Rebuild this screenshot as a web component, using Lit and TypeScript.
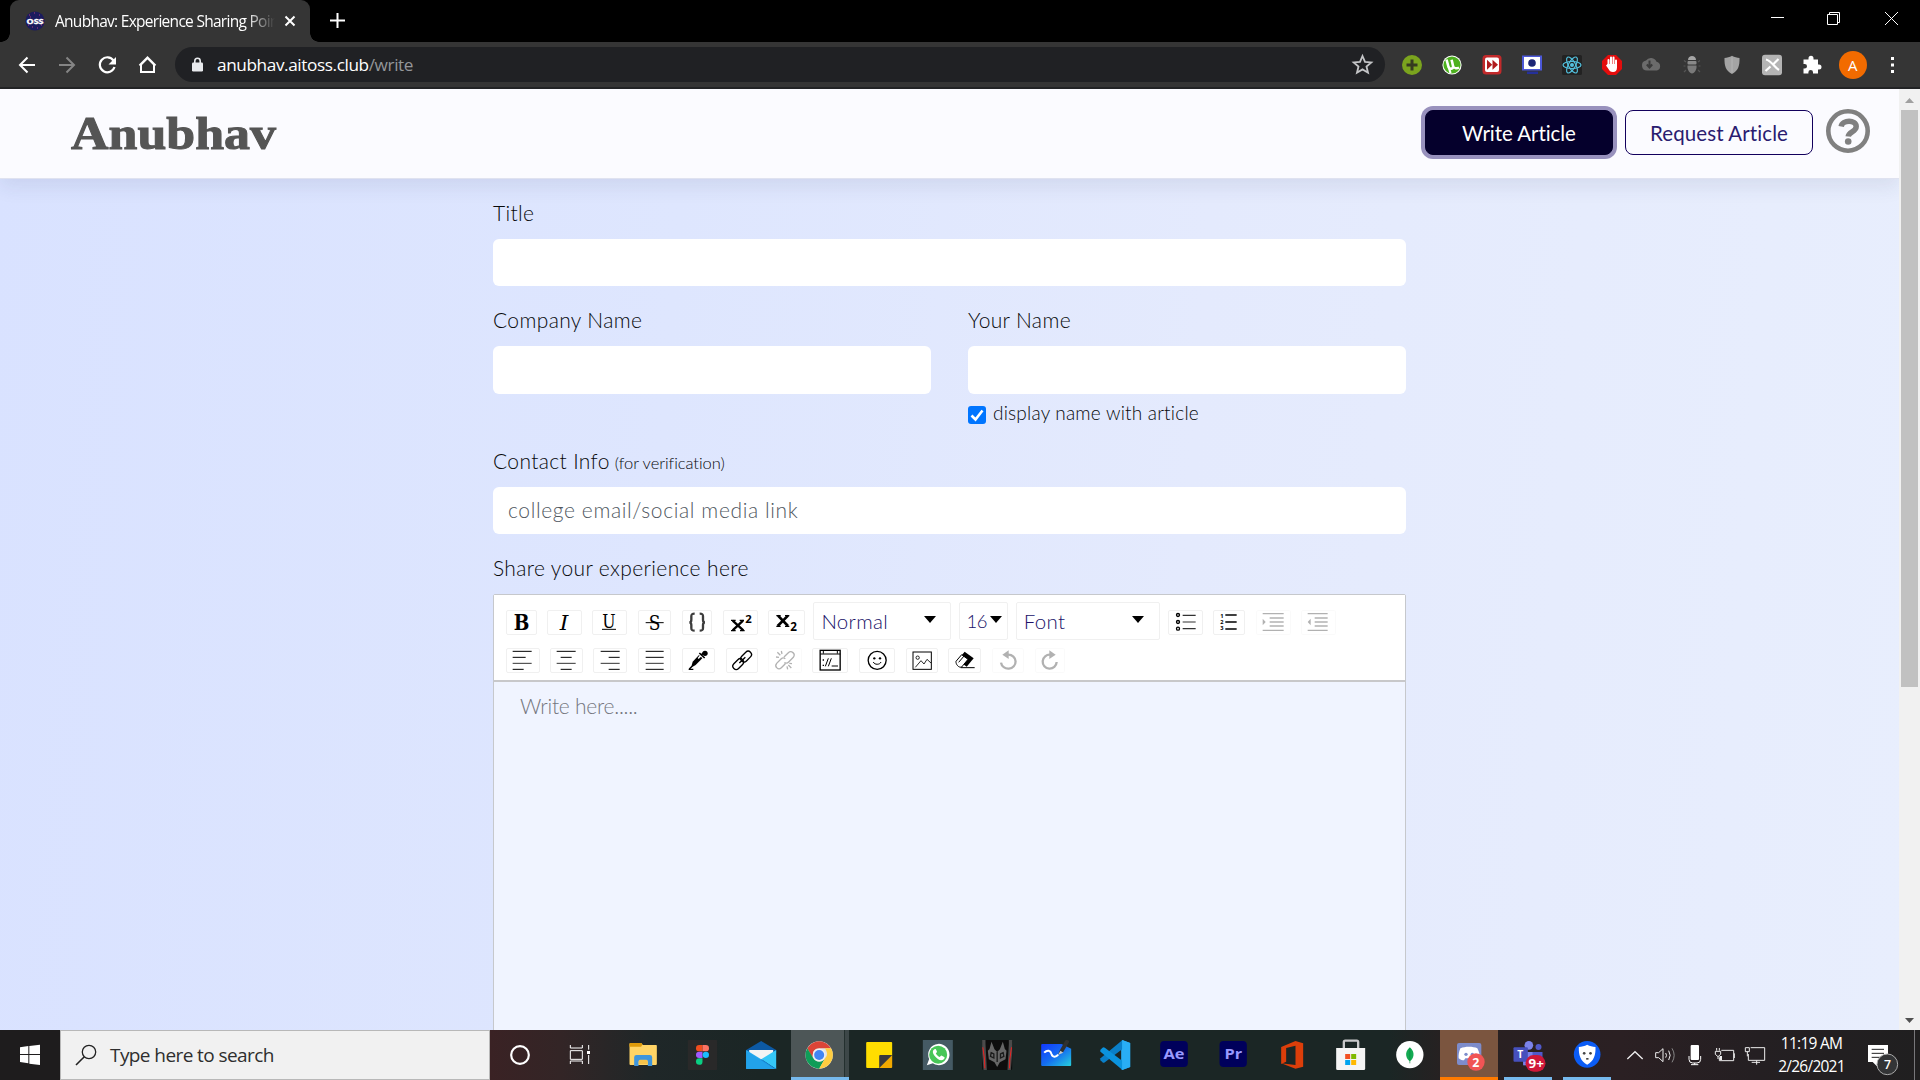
import { LitElement, html, css, svg, nothing, type TemplateResult } from "lit";
import { customElement } from "lit/decorators.js";

type Art = TemplateResult | TemplateResult[];

const pic = (w: number, h: number, box: string, art: Art) =>
  html`<svg width=${w} height=${h} viewBox=${box} fill="none" preserveAspectRatio="none">${art}</svg>`;

/* ---------- browser extensions, 40 x 40 cells centred on 20,20 ---------- */
const extensions: TemplateResult[] = [
  svg`<circle cx="20" cy="20" r="10" fill="#7ba41e"/><path d="M20 14.5v11M14.5 20h11" stroke="#363a20" stroke-width="3"/>`,
  svg`<circle cx="20" cy="20" r="9.6" fill="#fff"/><circle cx="20" cy="20" r="8.6" fill="#4cb01e"/><path d="M14.5 14.5l2 7.5c.8 2.6 5 2.2 4.600-.8l-1.500-6.500M21 21c.8 3 4.500 2.500 6 1.500" stroke="#fff" stroke-width="2.600"/><path d="M17 23l1.500 5" stroke="#fff" stroke-width="2.200"/>`,
  svg`<rect x="10.500" y="10" width="19" height="19.500" rx="3.500" fill="#c22a2b"/><rect x="13" y="12.500" width="14" height="14.500" rx="2" fill="#fff"/><path d="M15 14.800l5.200 5-5.200 5zM20.500 14.800l5.500 5-5.500 5z" fill="#b01c1e"/>`,
  svg`<rect x="10" y="10.500" width="20" height="15" fill="#4c58d8"/><rect x="12" y="12" width="16" height="12" fill="#fff"/><circle cx="20" cy="18" r="3.800" fill="#1c2677"/><path d="M15 27.800h11" stroke="#25309a" stroke-width="2.500"/>`,
  svg`<rect x="10" y="10" width="20" height="20" rx="1.500" fill="#222"/><g stroke="#53c1de" stroke-width="1.200"><ellipse cx="20" cy="20" rx="9" ry="3.500"/><ellipse cx="20" cy="20" rx="9" ry="3.500" transform="rotate(60 20 20)"/><ellipse cx="20" cy="20" rx="9" ry="3.500" transform="rotate(120 20 20)"/></g><circle cx="20" cy="20" r="2" fill="#53c1de"/>`,
  svg`<path d="M16 10h8l6 6v8l-6 6h-8l-6-6v-8z" fill="#e40d0d"/><path d="M16.500 21v-6M19 20v-7.500M21.500 20v-7.500M24 21v-5.500" stroke="#fff" stroke-width="2" stroke-linecap="round"/><path d="M15.500 19h9.500v3.500c0 3-1.500 4.500-4 4.500s-3.500-1-4.500-3l-2.500-3.500z" fill="#fff"/>`,
  svg`<path d="M15 25.500a5 5 0 0 1-1-9.900 6 6 0 0 1 10.500 1.200 4.500 4.500 0 0 1 .5 8.700z" fill="#6b6b6b"/><path d="M17.500 15.500v6M14.800 19.500l2.700 3 2.700-3" stroke="#3a3a3a" stroke-width="2"/>`,
  svg`<path d="M16 15c0-5.500 8-5.500 8 0z" fill="#a5a5a5"/><rect x="15.500" y="16" width="9" height="3.500" rx="1" fill="#898989"/><path d="M15.500 20.500h9c.5 4-2 8-4.500 8s-5-4-4.500-8z" fill="#7a7a7a"/><path d="M14 17l-2-1.500M26 17l2-1.500M13.500 21h-2M26.500 21h2M14 25l-2 2M26 25l2 2" stroke="#555" stroke-width="1.200"/>`,
  svg`<path d="M20 10.800c2.500 1.500 5 2 7.500 2.200.3 8-1.500 13-7.500 16-6-3-7.800-8-7.500-16 2.500-.2 5-.7 7.500-2.200z" fill="#a4a4a4"/><path d="M20 12.500v15" stroke="#b5b5b5" stroke-width="1"/>`,
  svg`<rect x="10" y="9.800" width="20" height="20.500" rx="3" fill="#b4b4b4"/><path d="M14 14.500c5 1 9 8 13 10.500M26.500 14l-5 5M18.500 21.500l-5 4.500" stroke="#fff" stroke-width="2.200"/>`,
  svg`<path d="M12 15.500h5v-1.200a2.500 2.500 0 1 1 5 0v1.200h4.500v5h1a2.500 2.500 0 1 1 0 5h-1v4h-5v-1.300a2.300 2.300 0 1 0-4.600 0v1.300H12v-5h1.200a2.300 2.300 0 1 0 0-4.600H12z" fill="#fff" transform="translate(-.5 -1)"/>`,
];

/* ---------- editor controls: [left, right] edges in the 1/3px icon grid ---------- */
interface Tool { l: number; r: number; off?: boolean; art: Art }

const line = (x1: number, x2: number, y: number, c = "#000", w = 3) =>
  svg`<path d=${`M${x1} ${y}H${x2}`} stroke=${c} stroke-width=${w}/>`;

const glyph = (s: string, x: number, y: number, size: number, len: number, cls: string) =>
  svg`<text class=${cls} x=${x} y=${y} font-size=${size} textLength=${len} lengthAdjust="spacingAndGlyphs" fill="#000">${s}</text>`;

const row1a: Tool[] = [
  { l: 79, r: 170, art: glyph("B", 102, 120, 64, 47, "slab bold") },
  { l: 202, r: 305, art: glyph("I", 240, 119, 62, 26, "slab ital") },
  { l: 337, r: 440, art: [glyph("U", 368, 113, 53, 40, "slab"), line(367, 409, 118)] },
  { l: 472, r: 572, art: [glyph("S", 504, 119, 62, 35, "slab"), line(495, 549, 98)] },
  { l: 604, r: 695, art: svg`<path d="M642 71c-9 0-10 2-10 8v10c0 5-2 8-6 8 4 0 6 3 6 8v9c0 6 1 8 10 8M657 71c9 0 10 2 10 8v10c0 5 2 8 6 8-4 0-6 3-6 8v9c0 6-1 8-10 8" stroke="#3c3c3c" stroke-width="7"/>` },
  { l: 727, r: 832, art: svg`<path d="M756 92l32 29M787 92l-31 29" stroke="#000" stroke-width="7"/><path d="M751 91h14M777 91h13M751 122h14M778 122h14" stroke="#000" stroke-width="4"/><text class="sans bold" x="794" y="98" font-size="34" fill="#000">2</text>` },
  { l: 865, r: 974, art: svg`<path d="M895 77l30 31M925 77l-31 31" stroke="#000" stroke-width="8"/><path d="M890 77h13M916 77h13M890 109h13M916 109h13" stroke="#000" stroke-width="4"/><text class="sans bold" x="932" y="122" font-size="35" fill="#000">2</text>` },
];

const row1b: Tool[] = [
  { l: 205, r: 308, art: svg`<g stroke="#000" stroke-width="4"><circle cx="235" cy="75" r="4.500"/><circle cx="235" cy="96" r="4.500"/><circle cx="235" cy="116" r="4.500"/><path d="M249 76h39M249 96h39M249 116h39" stroke="#333" stroke-width="3.500"/></g>` },
  { l: 340, r: 434, art: svg`<g fill="#000" font-size="17" class="sans bold"><text x="362" y="83">1</text><text x="362" y="102">2</text><text x="362" y="121">3</text></g><path d="M377 75h34M377 96h34M377 117h34" stroke="#000" stroke-width="5"/>` },
  { l: 466, r: 571, off: true, art: svg`<path d="M486 71h63M507 84h42M507 96h42M507 108h42M486 121h63" stroke="#000" stroke-width="4"/><path d="M486 86l9 10-9 10z" fill="#000"/>` },
  { l: 604, r: 707, off: true, art: svg`<path d="M624 71h60M645 84h39M645 96h39M645 108h39M624 121h60" stroke="#000" stroke-width="4"/><path d="M633 86l-9 10 9 10z" fill="#000"/>` },
];

const bars = (rows: number[][]) => rows.map(([a, b], i) => line(a, b, [185, 203, 221, 239][i], i === 2 ? "#333" : "#000"));

const row2: Tool[] = [
  { l: 79, r: 179, art: bars([[99, 156], [99, 138], [99, 156], [99, 132]]) },
  { l: 211, r: 308, art: bars([[231, 288], [243, 276], [231, 288], [243, 276]]) },
  { l: 340, r: 440, art: bars([[363, 420], [387, 420], [363, 420], [387, 420]]) },
  { l: 472, r: 572, art: bars([[495, 549], [495, 549], [495, 549], [495, 549]]) },
  { l: 604, r: 704, art: svg`<path d="M631 234l5-18 19-20 10 10-20 20z" fill="#000"/><path d="M651 205l9-11 4 4-10 10z" fill="#fff"/><path d="M656 190l16 15M661 197l9-9" stroke="#000" stroke-width="5"/><circle cx="673" cy="191" r="8" fill="#000"/><path d="M626 238l8-8M624 239h14" stroke="#000" stroke-width="4"/>` },
  { l: 736, r: 832, art: svg`<g stroke="#000" stroke-width="4"><rect x="778" y="191" width="37" height="20" rx="10" transform="rotate(-45 796 201)"/><rect x="754" y="213" width="37" height="20" rx="10" transform="rotate(-45 773 223)"/><path d="M776 220l18-17"/></g>` },
  { l: 865, r: 965, off: true, art: svg`<g stroke="#000" stroke-width="4"><path d="M913 202l13-13c9-8 23 3 15 14l-14 14c-4 4-9 4-13 2M917 222l-12 12c-9 9-22-3-14-13l13-13c4-4 9-4 13-1M902 197l-9-9M907 193l-2-9M898 203l-9-1M926 226l9 9M922 230l2 9M929 221l8 1"/></g>` },
  { l: 997, r: 1103, art: svg`<g stroke="#000" stroke-width="3"><rect x="1021.500" y="182" width="60" height="59" stroke-width="4"/><path d="M1022 193h60M1031 182v10M1073 182v10"/><path d="M1037 230l9-24M1046 230l9-24M1056 229h19"/></g><path d="M1029 209h4v4h-4zM1029 225h4v4h-4z" fill="#000"/>` },
  { l: 1135, r: 1244, art: svg`<circle cx="1189.500" cy="212" r="27" stroke="#000" stroke-width="4"/><circle cx="1181" cy="206" r="3.500" fill="#000"/><circle cx="1198" cy="206" r="3.500" fill="#000"/><path d="M1178 217c3 9 20 9 23 0" stroke="#000" stroke-width="3"/>` },
  { l: 1276, r: 1372, art: svg`<rect x="1297" y="187" width="55" height="52" stroke="#000" stroke-width="3"/><circle cx="1311" cy="204" r="5" stroke="#000" stroke-width="2.500"/><path d="M1304 233l17-20 9 10 9-14 12 11" stroke="#000" stroke-width="2.500"/>` },
  { l: 1405, r: 1504, art: svg`<path d="M1455 186l27 20-21 25-27-20z" fill="#000"/><path d="M1429 215l17-20 19 14-19 23c-9 3-18-8-17-17z" fill="#fff" stroke="#000" stroke-width="3"/><path d="M1437 218l17-20" stroke="#000" stroke-width="3"/><path d="M1443 234h42" stroke="#000" stroke-width="3"/>` },
  { l: 1537, r: 1633, off: true, art: svg`<path d="M1564 219a22 21 0 1 0 22-24h-5" stroke="#000" stroke-width="7"/><path d="M1587 182v26l-19-13z" fill="#000"/>` },
  { l: 1666, r: 1756, off: true, art: svg`<path d="M1731 217a21 21 0 1 1-19-22h2" stroke="#000" stroke-width="7"/><path d="M1709 182v26l19-13z" fill="#000"/>` },
];

/* ---------- taskbar apps: centre column in a 1/3px grid, middle row at 105 ---------- */
interface App { cx: number; cls?: string; art: Art }

const apps: App[] = [
  { cx: 460, art: svg`<path d="M418 72q0-3 3-3h32l5 6h40q2 0 2 2v55q0 3-3 3h-76q-3 0-3-3z" fill="#ffd466"/><path d="M418 80v-8q0-3 3-3h32l4 4-4 7z" fill="#dd9a0a"/><path d="M432 138v-26q0-7 7-7h40q7 0 7 7v26h-13v-13q0-5-5-5h-18q-5 0-5 5v13z" fill="#3e95dc"/><path d="M446 132v-9q0-4 4-4h18q4 0 4 4v9z" fill="#f6c34b"/>` },
  { cx: 636, art: svg`<rect x="592" y="60" width="88" height="90" rx="3" fill="#292929"/><path d="M636 75h-10a9.500 9.500 0 0 0 0 19h10z" fill="#f24e1e"/><path d="M636 75h10a9.500 9.500 0 0 1 0 19h-10z" fill="#ff7262"/><path d="M636 95h-10a9.500 9.500 0 0 0 0 19h10z" fill="#a259ff"/><circle cx="646" cy="104.500" r="9.500" fill="#1abcfe"/><path d="M636 115h-10a9.800 9.800 0 1 0 10 10z" fill="#0acf83"/>` },
  { cx: 814, art: svg`<path d="M768 90l45-27 45 27v8h-90z" fill="#0c59a4"/><path d="M777 90h72v10l-36 24-36-24z" fill="#f4f4f4"/><path d="M768 90l45 28-45 29z" fill="#28aef0"/><path d="M858 90l-45 28 45 29z" fill="#35c7f7"/><path d="M768 147l45-30 45 30z" fill="#1689dc"/><path d="M768 147V92l86 55z" fill="#22a2ea"/>` },
  { cx: 991, cls: "active", art: svg`<g transform="translate(-3 0)"><circle cx="990" cy="105" r="41" fill="#e3e3e3"/><path d="M954.500 84.500a41 41 0 0 1 71 0H990a20.500 20.500 0 0 0-17.700 10.200l-3 18z" fill="#db4437"/><path d="M954.500 84.500a41 41 0 0 0 35.500 61.500l18-31a20.500 20.500 0 0 1-35.700 0z" fill="#0f9d58"/><path d="M1025.500 84.500A41 41 0 0 1 990 146l17.800-31a20.500 20.500 0 0 0-1.500-30.500z" fill="#ffcd40"/><circle cx="990" cy="105" r="19" fill="#f1f1f1"/><circle cx="990" cy="105" r="15" fill="#4285f4"/></g>` },
  { cx: 1168, art: svg`<path d="M1131 66h72q3 0 3 3v36l-39 39h-36q-3 0-3-3V69q0-3 3-3z" fill="#ffdd00"/><path d="M1206 105v36q0 3-3 3h-36z" fill="#f2a900"/><path d="M1167 144v-36q0-3 3-3h36z" fill="#39393c"/>` },
  { cx: 1346, art: svg`<rect x="1299" y="60" width="90" height="90" fill="#455a64"/><path d="M1311 136l7-19a32 32 0 1 1 11 13z" fill="#fff"/><circle cx="1345" cy="104" r="27" fill="#48c658"/><path d="M1334 88c-6 3-7 10 0 19 9 11 19 18 28 11 3-3 3-6 1-7l-7-4c-3-1-4 3-6 4-5-1-10-6-12-11 3-2 4-4 3-6l-3-6c-1-1-3-1-4 0z" fill="#fff"/>` },
  { cx: 1522, art: svg`<g transform="translate(1410 0)"><rect x="66" y="60" width="90" height="90" rx="4" fill="#0d0d0d"/><path d="M66 60h10v12l4 78H70l-4-50z" fill="#4b4b4b"/><path d="M156 60h-10v12l-4 78h10l4-50z" fill="#4b4b4b"/><path d="M68 82l5 35 1 28M154 82l-5 35-1 28" stroke="#ef2020" stroke-width="3"/><path d="M94 65l9 23 8 8 8-8 9-23 6 22 5 5-3 26-17 9-8 14-8-14-17-9-3-26 5-5z" fill="#666"/><path d="M93 98l8 4v12l-10-5zM129 98l-8 4v12l10-5zM111 96v30" stroke="#1b1b1b" stroke-width="4"/></g>` },
  { cx: 1699, art: svg`<g transform="translate(1410 0)"><path d="M243 75q0-3 3-3h58l29 14v49q0 3-3 3h-84q-3 0-3-3z" fill="url(#board)"/><path d="M252 98c10-10 19-7 22 4 3 10 13 11 20 2" stroke="#fff" stroke-width="6"/><path d="M294 103l6-14 16-28c4-3 12 0 11 5l-18 30z" fill="#303030"/><path d="M293 105l8-13 8 6z" fill="#c9c9c9"/></g>` },
  { cx: 1876, art: svg`<g transform="translate(1410 0)"><path d="M486 60l24 9v72l-24 9-3-3V66z" fill="#29aef5"/><path d="M487 60v27l-53 40q-4 3-7 0l-6-6q-2-3 0-6z" fill="#0a7fc8"/><path d="M487 150v-27l-53-40q-4-3-7 0l-6 6q-2 3 0 6z" fill="#0b93de"/><path d="M486 60l24 9v72l-24 9z" fill="#29aef5"/></g>` },
  { cx: 2053, art: svg`<rect x="2010" y="63" width="83" height="78" rx="12" fill="#00005b"/><text class="sans bold" x="2020" y="116" font-size="43" textLength="63" lengthAdjust="spacingAndGlyphs" fill="#9999ff">Ae</text>` },
  { cx: 2230, art: svg`<rect x="2188" y="63" width="82" height="78" rx="12" fill="#00005b"/><text class="sans bold" x="2203" y="116" font-size="43" textLength="53" lengthAdjust="spacingAndGlyphs" fill="#9999ff">Pr</text>` },
  { cx: 2407, art: svg`<path d="M2373 81l43-18 23 7v70l-23 6-43-16 43 5V77l-28 7v41l-15 7z" fill="#dc3e0a"/>` },
  { cx: 2584, art: svg`<path d="M2561 90V66q0-4 4-4h35q4 0 4 4v24" stroke="#c9c9cb" stroke-width="7"/><path d="M2538 84h87v62q0 4-4 4h-79q-4 0-4-4z" fill="#f5f5f5"/><path d="M2565 102h15v15h-15z" fill="#f25022"/><path d="M2583 102h15v15h-15z" fill="#7fba00"/><path d="M2565 120h15v15h-15z" fill="#00a4ef"/><path d="M2583 120h15v15h-15z" fill="#ffb900"/>` },
  { cx: 2761, art: svg`<circle cx="2759" cy="104" r="41" fill="#fff"/><path d="M2759 82c9 8 12 16 11 24-1 9-6 15-11 18-5-3-10-9-11-18-1-8 2-16 11-24z" fill="#13aa52"/><path d="M2759 84v46" stroke="#0e8a43" stroke-width="2"/>` },
  { cx: 117, cls: "alert", art: svg`<rect x="81" y="39" width="73" height="66" rx="6" fill="#7d8ccb"/><path d="M92 55c12-6 38-6 50 0 6 12 8 20 7 30-7 5-12 6-17 6l-4-6h-22l-4 6c-5 0-10-1-16-6-1-10 1-20 5-30z" fill="#fff"/><circle cx="108" cy="73" r="5" fill="#7d8ccb"/><circle cx="127" cy="73" r="5" fill="#7d8ccb"/><circle cx="138" cy="96" r="26" fill="#f05455"/><text class="sans bold" x="127" y="110" font-size="37" fill="#fff">2</text>` },
  { cx: 294, cls: "open", art: svg`<circle cx="295" cy="46" r="13" fill="#7b83eb"/><circle cx="324" cy="51" r="9" fill="#5059c9"/><path d="M278 66h58v26q0 12-14 12h-44z" fill="#5059c9"/><path d="M278 66h28v40h-28z" fill="#7b83eb"/><rect x="249" y="52" width="43" height="43" rx="3" fill="#4650bd"/><text class="sans bold" x="260" y="85" font-size="31" fill="#fff">T</text><rect x="285" y="75" width="60" height="50" rx="25" fill="#cf1739"/><text class="sans bold" x="294" y="113" font-size="36" textLength="46" lengthAdjust="spacingAndGlyphs" fill="#fff">9+</text>` },
  { cx: 471, cls: "open", art: svg`<circle cx="470" cy="73" r="40" fill="#0b5cf5"/><path d="M470 44c8 4 16 6 25 7 1 24-5 43-25 53-20-10-26-29-25-53 9-1 17-3 25-7z" fill="#fff"/><circle cx="461" cy="70" r="4" fill="#444"/><circle cx="480" cy="70" r="4" fill="#444"/><path d="M467 84h7v5h-7z" fill="#444"/>` },
];

const tray: { w: number; cx: number; art: Art }[] = [
  { w: 30, cx: 615, art: svg`<path d="M592 87l23-22 23 22" stroke="#eee" stroke-width="4"/>` },
  { w: 30, cx: 704, art: svg`<path d="M676 68h9l13-12v39l-13-12h-9z" stroke="#eee" stroke-width="3"/><path d="M706 69q5 7 0 14M715 62q9 14 0 28" stroke="#eee" stroke-width="3"/><path d="M725 55q13 21 0 42" stroke="#888" stroke-width="3"/>` },
  { w: 30, cx: 794, art: svg`<rect x="781" y="45" width="25" height="45" rx="3" fill="#fff"/><path d="M776 78v10q0 11 11 11h13q11 0 11-11V78M793 99v5M782 104h22" stroke="#fff" stroke-width="3"/>` },
  { w: 30, cx: 885, art: svg`<path d="M874 61h37v31h-43v-10" stroke="#eee" stroke-width="3"/><path d="M913 70v14M860 54v8M868 54v8M856 64h16v9l-8 7-8-7zM864 80v7" stroke="#eee" stroke-width="3"/><path d="M869 78h7v12h-7z" fill="#eee"/>` },
  { w: 30, cx: 975, art: svg`<path d="M962 53h42v38h-49V72M980 91v13M965 97h25M946 53h12v12h-12zM952 65v14" stroke="#eee" stroke-width="3"/>` },
];

@customElement("app-root")
export class AppRoot extends LitElement {
  static styles = css`
    :host { display: block; width: 1920px; height: 1080px; overflow: hidden; }
    * { box-sizing: border-box; }
    svg { display: block; flex: none; overflow: visible; }
    .screen { display: flex; flex-direction: column; width: 1920px; height: 1080px; font-family: "Lato", "Open Sans", sans-serif; }
    .ui { font-family: "Open Sans", "Noto Sans", sans-serif; }
    .slab { font-family: "DejaVu Serif", serif; }
    .sans { font-family: "Open Sans", sans-serif; }
    .bold { font-weight: 700; }
    .ital { font-style: italic; }

    .tabs { display: flex; height: 42px; background: #000; flex: none; }
    .tab { position: relative; display: flex; align-items: center; width: 300px; height: 42px; margin-left: 10px; padding-left: 15px; background: #353535; border-radius: 9px 9px 0 0; color: #fff; }
    .flare { position: absolute; bottom: 0; width: 9px; height: 9px; }
    .flare.left { left: -9px; background: radial-gradient(circle at 0 0, transparent 8.5px, #353535 9px); }
    .flare.right { right: -9px; background: radial-gradient(circle at 100% 0, transparent 8.5px, #353535 9px); }
    .tab-title { width: 220px; margin: -1px 0 0 10px; overflow: hidden; white-space: nowrap; font-size: 15.500px; letter-spacing: -0.72px; -webkit-mask-image: linear-gradient(90deg, #000 87%, transparent 100%); mask-image: linear-gradient(90deg, #000 87%, transparent 100%); }
    .tab-close { margin-left: 10px; }
    .plus { margin: 13px 0 0 20px; }
    .window { display: flex; margin-left: auto; }

    .nav { display: flex; align-items: center; height: 47px; flex: none; background: #353535; border-bottom: 2px solid #222325; }
    .nav-btns { display: flex; padding-left: 7px; width: 175px; }
    .address { display: flex; align-items: center; width: 1210px; height: 35px; border-radius: 18px; background: #202124; padding-left: 16px; margin-right: 7.300px; }
    .url { margin-left: 9px; font-size: 17.200px; line-height: 34px; color: #fff; letter-spacing: -0.4px; flex: 1; }
    .url span { color: #949699; }
    .avatar { width: 28px; height: 28px; margin-left: 6.500px; border-radius: 50%; background: #f26b00; color: #fff; font-size: 15px; line-height: 28px; text-align: center; }

    .view { display: flex; height: 941px; flex: none; }
    .page { display: flex; flex-direction: column; width: 1899px; background: linear-gradient(94deg, #d9e2ff 0%, #dee6fe 35%, #e4eafd 62%, #e8eefd 100%); overflow: hidden; }
    .scroll { width: 21px; background: #f1f1f1; display: flex; flex-direction: column; align-items: center; }
    .thumb { width: 17px; height: 577px; background: #c1c1c1; }
    .arrow-down { margin-top: auto; }
    .head { display: flex; align-items: center; height: 90px; flex: none; padding: 0 0 3px 70px; background: #fbfbff; box-shadow: 0 8px 18px rgba(40, 60, 90, 0.09); border-bottom: 1px solid #dfe2f0; }
    .brand { height: 60px; }
    .brand-text { font-family: "Liberation Serif", serif; font-weight: 700; }
    .btn { display: flex; align-items: center; justify-content: center; width: 188px; height: 45px; padding-top: 2px; border: 1px solid #12005c; border-radius: 8px; font-size: 20.500px; font-weight: 400; color: #2a1c70; letter-spacing: 0.1px; }
    .btn.primary { margin-left: auto; margin-right: 12px; background: #05002c; border-color: #05002c; color: #fff; box-shadow: 0 0 0 4px #9891bd; letter-spacing: -0.05px; }
    .help { margin: 0 29px 2px 13px; }

    .form { width: 913px; margin: 20px 0 0 493px; color: #212529; font-size: 21px; font-weight: 300; }
    .label { height: 30px; line-height: 28px; margin-bottom: 10px; color: #07090b; letter-spacing: 0.36px; white-space: nowrap; }
    .label small { font-size: 16.500px; letter-spacing: -0.05px; margin-left: -1px; }
    .field { display: block; width: 100%; height: 47.500px; border: 0; border-radius: 6px; background: #fff; padding: 0 15px 2px; margin: 0 0 20px; font: 300 21px "Lato", sans-serif; letter-spacing: 0.62px; }
    .field::placeholder { color: #50585f; opacity: 1; }
    .form > .field:nth-child(2) { height: 47px; }
    .cols { display: grid; grid-template-columns: 438px 438px; column-gap: 37px; height: 140.900px; }
    .cols .field { margin-bottom: 5px; }
    .check { display: flex; align-items: center; gap: 7px; height: 30px; font-size: 19px; color: #07090b; letter-spacing: 0.2px; }
    .check-text { margin-top: -2px; }
    .box { display: grid; place-items: center; width: 18px; height: 18px; border-radius: 3px; background: #0075ff; margin-top: 2px; }
    .editor { width: 913px; height: 500px; border: 1px solid #c6c8cc; border-radius: 2px 2px 0 0; background: #f0f4ff; }
    .tools { height: 87px; padding: 8px 0 0 6.900px; background: #fff; border-bottom: 2px solid #c8c8ca; }
    .row { display: flex; align-items: center; height: 38px; }
    .tool { flex: none; margin: 0 5.390px; height: 25px; border: 1px solid #f0f0f0; border-radius: 2px; }
    .tool svg { margin: -1px; }
    .off { opacity: 0.3; }
    .pick { flex: none; display: flex; align-items: center; justify-content: space-between; height: 38px; margin: -2px 3.800px 0; padding: 0 14px 0 7px; border: 1px solid #f0f0f0; border-radius: 2px; color: #201268; font-size: 20.500px; letter-spacing: 0.3px; }
    .style { width: 137.600px; margin-left: 3.300px; }
    .size { width: 49.500px; padding-right: 5px; font-size: 18.500px; letter-spacing: -0.5px; }
    .face { width: 144px; padding-right: 15px; margin-right: 3.300px; }
    .pick svg { margin-top: -4px; }
    .hint { padding: 9px 0 0 26px; color: #74767e; line-height: 30px; letter-spacing: -0.25px; }

    .taskbar { display: flex; height: 50px; flex: none; color: #fff; background: linear-gradient(90deg, #1e1c1d 0, #1e1c1d 60px, #3a2224 490px, #332526 560px, #1f2728 650px, #1b2625 760px, #1b2625 1390px, #282021 1450px, #2b2023 1620px, #241f22 1760px, #201f20 1920px); }
    .start { width: 60px; }
    .search { display: flex; align-items: center; width: 430px; background: #f1f1f1; border: 1px solid #b8b8b8; padding-left: 14px; color: #2e2e2e; font-size: 19px; }
    .search-text { margin-left: 13px; letter-spacing: -0.58px; }
    .app { width: 59px; height: 50px; flex: none; }
    .active { width: 58px; margin-right: 1px; background: linear-gradient(90deg, #4d5657 53px, #24302f 53px, #24302f 54px, #3d4748 54px); border-bottom: 3px solid #76b9ed; }
    .alert { width: 58px; margin-right: 1px; background: #7b553f; box-shadow: inset 0 -3px #ff7a00; }
    .open { background: linear-gradient(#76b9ed, #76b9ed) 5px 47px / 48px 3px no-repeat; }
    .tray { display: flex; margin-left: 2.500px; }
    .clock { width: 84px; text-align: center; font-size: 15.500px; line-height: 23px; padding-top: 2px; letter-spacing: -0.75px; white-space: nowrap; }
    .note { margin-left: 10px; }
    .peek { width: 1px; height: 50px; margin-left: auto; margin-right: 5px; background: #77777a; }
  `;

  private tool(t: Tool, y: number) {
    const w = (t.r - t.l) / 3;
    return html`<div class="tool ${t.off ? "off" : ""}">${pic(w, 25, `${t.l} ${y} ${t.r - t.l} 75`, t.art)}</div>`;
  }

  private pick(cls: string, label: string) {
    return html`<div class="pick ${cls}"><span>${label}</span>${pic(12, 7, "0 0 12 7", svg`<path d="M0 0h12L6 7z" fill="#000"/>`)}</div>`;
  }

  private field(label: unknown, hint = "") {
    return html`<div class="label">${label}</div><input class="field" type="text" placeholder=${hint || nothing} />`;
  }

  private browser() {
    return html`
      <div class="tabs ui">
        <div class="tab">
          <span class="flare left"></span><span class="flare right"></span>
          ${pic(20, 20, "0 0 20 20", svg`<circle cx="10" cy="10" r="9.600" fill="#1b1b5e"/><path d="M4 4h1M9 2h1M14 4h1M3 14h1M7 16h1M12 17h1M16 14h1M5 6h1" stroke="#b23a7c"/><text class="sans bold" x="1.500" y="12.800" font-size="7.500" textLength="17" lengthAdjust="spacingAndGlyphs" fill="#fff" stroke="#fff" stroke-width=".4">OSS</text>`)}
          <div class="tab-title">Anubhav: Experience Sharing Point</div>
          <div class="tab-close">${pic(10, 10, "0 0 10 10", svg`<path d="M.5.5l9 9M9.500.5l-9 9" stroke="#fff" stroke-width="2"/>`)}</div>
        </div>
        <div class="plus">${pic(15, 15, "0 0 15 15", svg`<path d="M7.500 0v15M0 7.500h15" stroke="#fff" stroke-width="2"/>`)}</div>
        <div class="window">${pic(170, 42, "1750 0 170 42", svg`<g stroke="#fff" stroke-width="1"><path d="M1771 17.500h13M1827.500 14.500h10v10h-10zM1829.500 14.500v-2h10v10h-2M1885 12l13 13M1898 12l-13 13"/></g>`)}</div>
      </div>
      <div class="nav ui">
        <div class="nav-btns">${[
          svg`<path d="M28 20H13M20.500 12.500L13 20l7.500 7.500" stroke="#fff" stroke-width="2"/>`,
          svg`<path d="M12 20h15M19.500 12.500L27 20l-7.500 7.500" stroke="#858585" stroke-width="2"/>`,
          svg`<path d="M26.500 15.500a7.500 7.500 0 1 0 1 6.500" stroke="#fff" stroke-width="2.200"/><path d="M29 12v7.500h-7.500z" fill="#fff"/>`,
          svg`<path d="M20.500 13l-6.500 6.500v7.500h13v-7.500zM12.500 20.500l8-8 8 8" stroke="#fff" stroke-width="2"/>`,
        ].map((a) => pic(40, 40, "0 0 40 40", a))}</div>
        <div class="address">
          ${pic(13, 16, "0 0 13 16", svg`<rect x="1" y="5.500" width="11" height="9" rx="1.200" fill="#e8eaed"/><path d="M3.800 6V4a2.700 2.700 0 0 1 5.400 0v2" stroke="#e8eaed" stroke-width="1.600"/>`)}
          <div class="url">&nbsp;anubhav.aitoss.club<span>/write</span></div>
          ${pic(45, 35, "0 0 45 35", svg`<path d="M22.500 9l2.500 5.900 6.300.5-4.800 4.100 1.500 6.200-5.500-3.300-5.500 3.300 1.500-6.200-4.800-4.100 6.300-.5z" stroke="#c4c5c7" stroke-width="1.800"/>`)}
        </div>
        ${extensions.map((a) => pic(40, 40, "0 0 40 40", a))}
        <div class="avatar">A</div>
        ${pic(50, 40, "0 0 50 40", svg`<path d="M24 12h3v3h-3zM24 18.500h3v3h-3zM24 25h3v3h-3z" fill="#fff"/>`)}
      </div>`;
  }

  private page() {
    return html`
      <div class="page">
        <div class="head">
          <div class="brand">${pic(210, 60, "70 103 210 60", svg`<text class="brand-text" x="71" y="149.500" font-size="46" textLength="205" lengthAdjust="spacingAndGlyphs" fill="#555" stroke="#555" stroke-width="1">Anubhav</text>`)}</div>
          <div class="btn primary"><span>Write Article</span></div>
          <div class="btn"><span>Request Article</span></div>
          <div class="help">${pic(44, 44, "0 0 44 44", svg`<circle cx="22" cy="22" r="19.700" stroke="#808080" stroke-width="4.600"/><path d="M15.200 17.500c1-7 15-7 15 0 0 5.500-7.500 5-8 10" stroke="#808080" stroke-width="5.500"/><circle cx="22.200" cy="32.500" r="3.300" fill="#808080"/>`)}</div>
        </div>
        <div class="form">
          ${this.field("Title")}
          <div class="cols">
            <div>${this.field("Company Name")}</div>
            <div>
              ${this.field("Your Name")}
              <div class="check"><span class="box">${pic(14, 14, "0 0 14 14", svg`<path d="M1.500 7.500l4 4L12.500 2.500" stroke="#fff" stroke-width="2.600"/>`)}</span><span class="check-text">display name with article</span></div>
            </div>
          </div>
          ${this.field(html`Contact Info <small>(for verification)</small>`, "college email/social media link")}
          <div class="label">Share your experience here</div>
          <div class="editor">
            <div class="tools">
              <div class="row">
                ${row1a.map((t) => this.tool(t, 60))}
                ${this.pick("style", "Normal")}${this.pick("size", "16")}${this.pick("face", "Font")}
                ${row1b.map((t) => this.tool(t, 60))}
              </div>
              <div class="row">${row2.map((t) => this.tool(t, 175))}</div>
            </div>
            <div class="hint">Write here.....</div>
          </div>
        </div>
      </div>
      <div class="scroll">
        ${pic(17, 21, "0 0 17 21", svg`<path d="M4 14l4.500-5 4.500 5z" fill="#a0a0a0"/>`)}
        <div class="thumb"></div>
        <div class="arrow-down">${pic(17, 20, "0 0 17 20", svg`<path d="M4 8l4.500 5L13 8z" fill="#505050"/>`)}</div>
      </div>`;
  }

  private taskbar() {
    return html`
      <div class="taskbar ui">
        <div class="start">${pic(60, 50, "0 30 180 150", svg`<path d="M60 82l25-4v24H60zM88 78l32-4v28H88zM60 105h25v25l-25-4zM88 105h32v30l-32-4z" fill="#fff"/>`)}</div>
        <div class="search">
          ${pic(22, 22, "0 0 22 22", svg`<circle cx="14" cy="8" r="6.700" stroke="#222" stroke-width="1.300"/><path d="M9.300 12.700L1 21" stroke="#222" stroke-width="1.600"/>`)}
          <span class="search-text">Type here to search</span>
        </div>
        ${pic(60, 50, "0 30 180 150", svg`<circle cx="90" cy="105" r="26.500" stroke="#fff" stroke-width="6.500"/>`)}
        ${pic(64, 50, "180 30 192 150", svg`<path d="M241 75v9h36v-9M241 92h36v26h-36zM241 132v-9h36v9M296 75v14M296 105v27" stroke="#fff" stroke-width="3"/><path d="M291 93h9v9h-9z" fill="#fff"/>`)}
        ${apps.map((a, i) => {
          const w = a.cls === "alert" ? 174 : 177;
          const y = i > 13 ? 0 : 30;
          return html`<div class="app ${a.cls ?? ""}">${pic(w / 3, 50, `${a.cx - w / 2} ${y} ${w} 150`,
            i === 7 ? svg`<defs><linearGradient id="board" x1="0" y1="0" x2="1" y2="1"><stop offset="0" stop-color="#1238ff"/><stop offset=".5" stop-color="#146cf0"/><stop offset="1" stop-color="#27d0dc"/></linearGradient></defs>${a.art}` : a.art)}</div>`;
        })}
        <div class="tray">${tray.map((t) => pic(t.w, 50, `${t.cx - t.w * 1.5} 0 ${t.w * 3} 150`, t.art))}</div>
        <div class="clock">11:19 AM<br />2/26/2021</div>
        <div class="note">${pic(40, 50, "1305 0 120 150", svg`<path d="M1317 45h60v51h-31v15l-15-15h-14z" fill="#fff"/><path d="M1328 58h37M1328 70h37M1328 82h25" stroke="#222" stroke-width="3"/><circle cx="1375" cy="103" r="31" fill="#333436" stroke="#aaa" stroke-width="3"/><text class="sans" x="1365" y="117" font-size="37" font-weight="600" fill="#fff">7</text>`)}</div>
        <div class="peek"></div>
      </div>`;
  }

  render() {
    return html`<div class="screen">${this.browser()}<div class="view">${this.page()}</div>${this.taskbar()}</div>`;
  }
}
